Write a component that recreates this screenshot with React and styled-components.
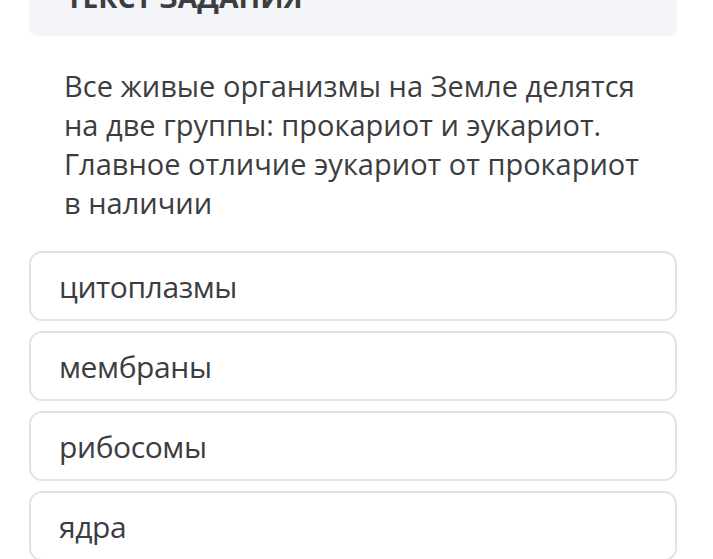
import React from "react";
import styled, { createGlobalStyle } from "styled-components";

const GlobalStyle = createGlobalStyle`
    html, body {
        margin: 0;
        padding: 0;
        background: #ffffff;
        overflow: hidden;
    }
    body {
        font-family: "Open Sans", "Noto Sans", sans-serif;
        color: #3b3d40;
    }
`;

const options = ["цитоплазмы", "мембраны", "рибосомы", "ядра"];

const App = () => {
    return (
        <>
            <GlobalStyle/>
            <Page>
                <TaskHeader>
                    <h2>ТЕКСТ ЗАДАНИЯ</h2>
                </TaskHeader>

                <Question>
                    Все живые организмы на Земле делятся на две группы: прокариот и эукариот.
                    Главное отличие эукариот от прокариот в наличии
                </Question>

                <Options>
                    {options.map((name) => (
                        <Option key={name}>{name}</Option>
                    ))}
                </Options>
            </Page>
        </>
    )
}

export default App;

const Page = styled.div`
    width: 713px;
    padding: 0 36px 0 29px;
    box-sizing: border-box;
    margin-top: -40px;
`;

const TaskHeader = styled.div`
    height: 76px;
    background: #f4f5f8;
    border-radius: 0 0 9px 9px;
    display: flex;
    align-items: flex-end;
    padding: 0 0 24px 37px;
    box-sizing: border-box;

    h2 {
        margin: 0;
        font-size: 28.4px;
        line-height: 30px;
        font-weight: 700;
        color: #3b3d40;
    }
`;

const Question = styled.p`
    width: 592px;
    margin: 30px 0 0 35px;
    font-size: 29px;
    line-height: 39px;
    color: #3b3d40;
`;

const Options = styled.div`
    margin-top: 29px;
    display: flex;
    flex-direction: column;
    gap: 10px;
`;

const Option = styled.div`
    height: 70px;
    border: 2px solid #e3e3e3;
    border-radius: 13px;
    box-sizing: border-box;
    display: flex;
    align-items: center;
    padding-left: 28px;
    font-size: 30px;
    letter-spacing: -0.4px;
    color: #3b3d40;
`;
